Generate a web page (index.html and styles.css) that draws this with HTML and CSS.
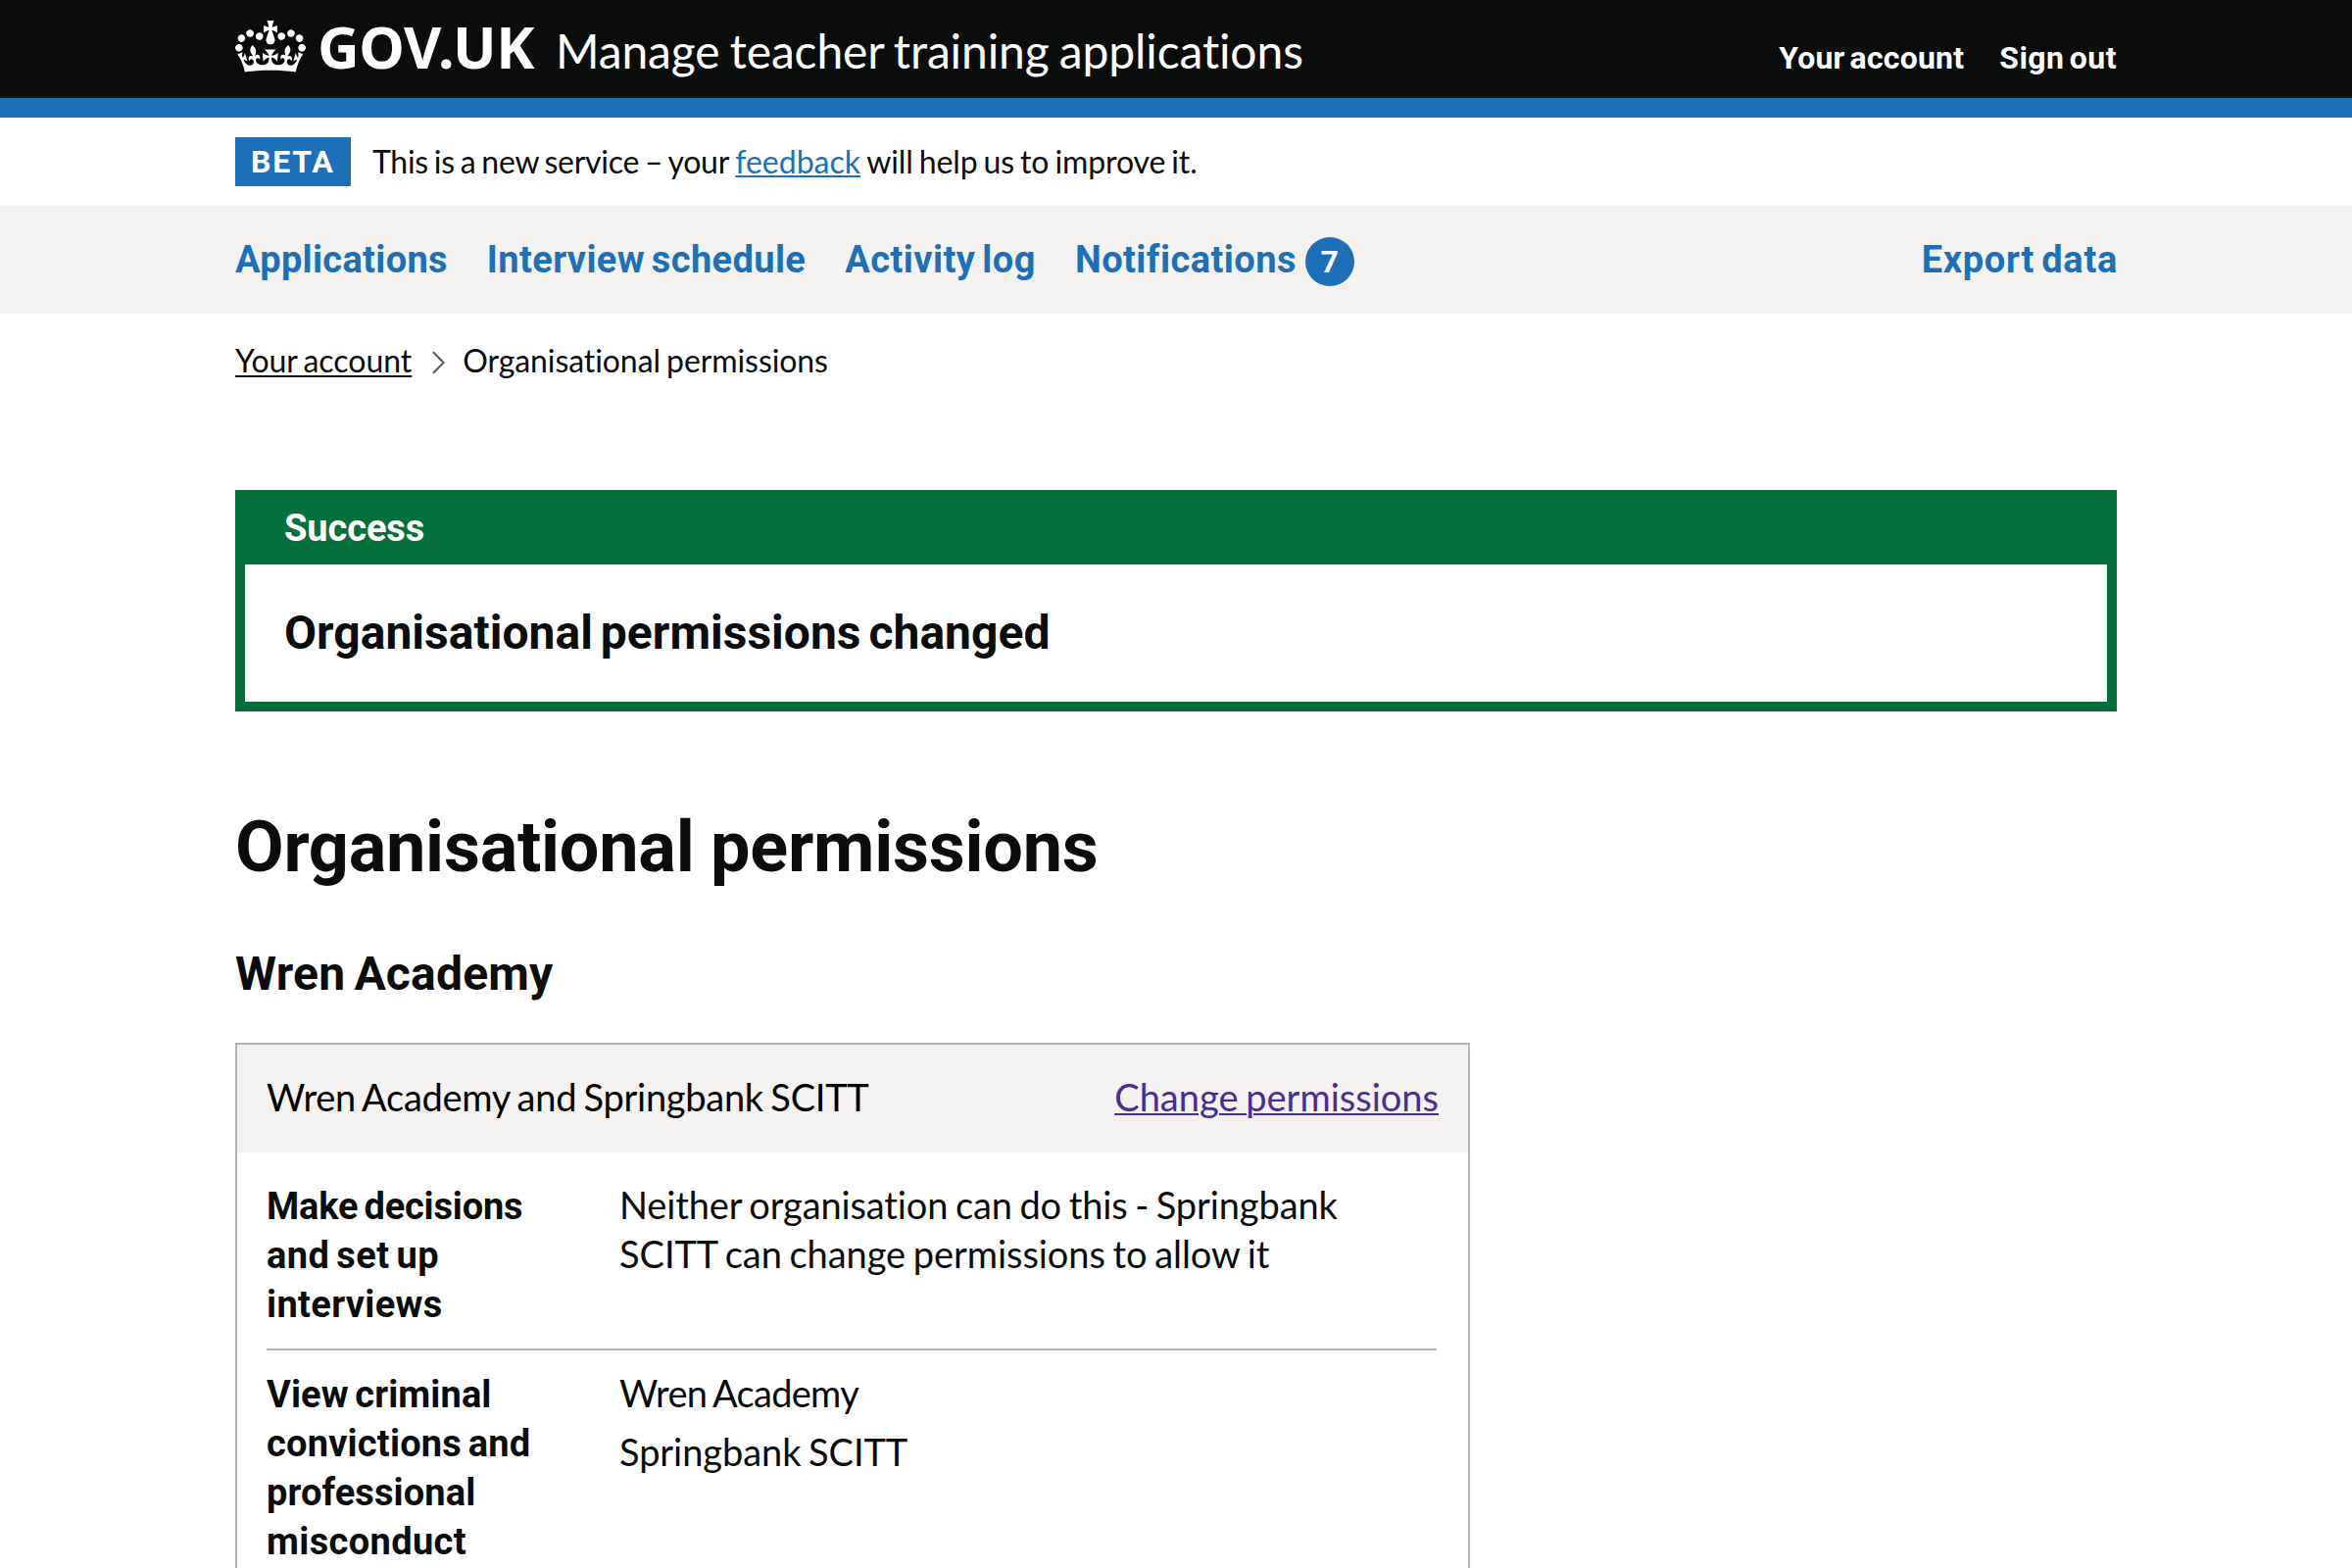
FILE: index.html
```
<!DOCTYPE html>
<html lang="en">
<head>
<meta charset="utf-8">
<title>Organisational permissions - Manage teacher training applications - GOV.UK</title>
<link rel="stylesheet" href="styles.css">
</head>
<body>
<header class="header">
  <div class="container header-inner">
    <svg class="crown" viewBox="0 0 132 97" width="72" height="53" aria-hidden="true"><path fill="#fff" fill-rule="evenodd" d="M25 30.2c3.5 1.5 7.7-.2 9.1-3.7 1.5-3.6-.2-7.8-3.9-9.2-3.6-1.4-7.6.3-9.1 3.9-1.4 3.5.3 7.5 3.9 9zM9 39.5c3.6 1.5 7.8-.2 9.2-3.7 1.5-3.6-.2-7.8-3.9-9.1-3.6-1.5-7.6.2-9.1 3.8-1.4 3.5.3 7.5 3.8 9zM4.4 57.2c3.5 1.5 7.7-.2 9.1-3.8 1.5-3.6-.2-7.7-3.9-9.1-3.5-1.5-7.6.3-9.1 3.8-1.4 3.5.3 7.6 3.9 9.1zm38.3-21.4c3.5 1.5 7.7-.2 9.1-3.8 1.5-3.6-.2-7.7-3.9-9.1-3.6-1.5-7.6.3-9.1 3.8-1.3 3.6.4 7.7 3.9 9.1zm64.4-5.6c-3.6 1.5-7.8-.2-9.1-3.7-1.5-3.6.2-7.8 3.8-9.2 3.6-1.4 7.7.3 9.2 3.9 1.3 3.5-.4 7.5-3.9 9zm15.9 9.3c-3.6 1.5-7.7-.2-9.1-3.7-1.5-3.6.2-7.8 3.7-9.1 3.6-1.5 7.7.2 9.2 3.8 1.5 3.5-.3 7.5-3.8 9zm4.7 17.7c-3.6 1.5-7.8-.2-9.2-3.8-1.5-3.6.2-7.7 3.9-9.1 3.6-1.5 7.7.3 9.2 3.8 1.3 3.5-.4 7.6-3.9 9.1zM89.3 35.8c-3.6 1.5-7.8-.2-9.2-3.8-1.4-3.6.2-7.7 3.9-9.1 3.6-1.5 7.7.3 9.2 3.8 1.4 3.6-.3 7.7-3.9 9.1zM69.7 17.7l8.9 4.7V9.3l-8.9 2.8c-.2-.3-.5-.6-.9-.9L72.4 0H59.6l3.5 11.2c-.3.3-.6.5-.9.9l-8.8-2.8v13.1l8.8-4.7c.3.3.6.7.9.9l-5 15.4v.1c-.2.8-.4 1.6-.4 2.4 0 4.1 3.1 7.5 7 8.1h.2c.3 0 .7.1 1 .1.4 0 .7 0 1-.1h.2c4-.6 7.1-4.1 7.1-8.1 0-.8-.1-1.7-.4-2.4V34l-5.1-15.4c.4-.2.7-.6 1-.9zM66 92.8c16.9 0 32.8 1.1 47.1 3.2 4-16.9 8.9-26.7 14-33.5l-9.6-3.4c1 4.9 1.1 7.2 0 10.2-1.5-1.4-3-4.3-4.2-8.7L108.6 76c2.8-2 5-3.2 7.5-3.3-4.4 9.4-10 11.9-13.6 11.2-4.3-.8-6.3-4.6-5.6-7.9 1-4.7 5.7-5.9 8-.5 4.3-8.7-3-11.4-7.6-8.8 7.1-7.2 7.9-13.5 2.1-21.1-8 6.1-8.1 12.3-4.5 20.8-4.7-5.4-12.1-2.5-9.5 6.2 3.4-5.2 7.9-2 7.2 3.1-.6 4.3-6.4 7.8-13.5 7.2-10.3-.9-10.9-8-11.2-13.8 2.5-.5 7.1 1.8 11 7.3L80.2 60c-4.1 4.4-8 5.3-12.3 5.4 1.4-4.4 8-11.6 8-11.6H55.5s6.4 7.2 7.9 11.6c-4.2-.1-8-1-12.3-5.4l1.4 16.4c3.9-5.5 8.5-7.7 10.9-7.3-.3 5.8-.9 12.8-11.1 13.8-7.2.6-12.9-2.9-13.5-7.2-.7-5 3.8-8.3 7.1-3.1 2.7-8.7-4.6-11.6-9.4-6.2 3.7-8.5 3.6-14.7-4.6-20.8-5.8 7.6-5 13.9 2.2 21.1-4.7-2.6-11.9.1-7.7 8.8 2.3-5.5 7.1-4.2 8.1.5.7 3.3-1.3 7.1-5.7 7.9-3.5.7-9-1.8-13.5-11.2 2.5.1 4.7 1.3 7.5 3.3l-4.7-15.4c-1.2 4.4-2.7 7.2-4.3 8.7-1.1-3-.9-5.3 0-10.2l-9.5 3.4c5 6.9 9.9 16.7 14 33.5 14.8-2.1 30.8-3.2 47.7-3.2z"/></svg>
    <span class="logotype">GOV.UK</span>
    <span class="service-name">Manage teacher training applications</span>
    <nav class="header-links">
      <a class="link-account" href="#">Your account</a>
      <a class="link-signout" href="#">Sign out</a>
    </nav>
  </div>
</header>

<div class="container phase-banner">
  <strong class="tag">BETA</strong>
  <span class="phase-text"><span class="phase-lead">This is a new service – your</span> <a class="link" href="#">feedback</a> <span class="phase-tail">will help us to improve it.</span></span>
</div>

<nav class="primary-nav">
  <div class="container primary-nav-inner">
    <a class="nav-applications" href="#">Applications</a>
    <a class="nav-interviews" href="#">Interview schedule</a>
    <a class="nav-activity" href="#">Activity log</a>
    <a class="nav-notifications" href="#">Notifications<span class="count">7</span></a>
    <a class="nav-export" href="#">Export data</a>
  </div>
</nav>

<div class="container breadcrumbs">
  <a class="crumb-link" href="#">Your account</a>
  <svg class="chevron" width="14" height="24" viewBox="0 0 14 24" aria-hidden="true"><path d="M1 1.2 11.6 12 1 22.8" fill="none" stroke="#505a5f" stroke-width="2"/></svg>
  <span class="crumb-current">Organisational permissions</span>
</div>

<main class="container">
  <section class="notification">
    <h2 class="notification-title">Success</h2>
    <div class="notification-content"><p class="notification-heading">Organisational permissions changed</p></div>
  </section>

  <h1 class="page-title">Organisational permissions</h1>
  <h2 class="section-title">Wren Academy</h2>

  <section class="card">
    <div class="card-header">
      <h3 class="card-title">Wren Academy and Springbank SCITT</h3>
      <a class="card-action" href="#">Change permissions</a>
    </div>
    <dl class="summary">
      <div class="row">
        <dt><span class="key-make">Make decisions</span> <span class="key-setup">and set up</span> <span class="key-word">interviews</span></dt>
        <dd><span class="value-neither">Neither organisation can do this - Springbank</span> <span class="value-can">SCITT can change permissions to allow it</span></dd>
      </div>
      <div class="row">
        <dt><span class="key-view">View criminal</span> <span class="key-convictions">convictions and</span> <span class="key-professional">professional</span> <span class="key-word">misconduct</span></dt>
        <dd>
          <ul>
            <li class="value-wren">Wren Academy</li>
            <li class="value-springbank">Springbank SCITT</li>
          </ul>
        </dd>
      </div>
    </dl>
  </section>
</main>
</body>
</html>
```
FILE: styles.css
```
* { box-sizing: border-box; }

body {
  margin: 0;
  height: 1600px;
  overflow: hidden;
  background: #fff;
  color: #0b0c0c;
  font: 400 38px/50px Lato, "Liberation Sans", sans-serif;
  word-spacing: -2px;
}

h1, h2, h3, p, dl, dt, dd, ul { margin: 0; padding: 0; }
ul { list-style: none; }

.container { width: 1920px; margin: 0 auto; }

.logotype, .header-links, .tag, .primary-nav, .notification,
.page-title, .section-title, dt {
  font-family: Roboto, "Liberation Sans", sans-serif;
  font-weight: 700;
  word-spacing: -3px;
}

/* Header */
.header {
  height: 120px;
  background: #0b0c0c;
  border-bottom: 20px solid #1d70b8;
  color: #fff;
}
.header-inner { display: flex; align-items: baseline; padding-top: 17px; }
.crown { align-self: flex-start; margin: 4px 12px 0 0; }
.logotype { font: 700 59px/60px "Noto Sans", sans-serif; letter-spacing: -.4px; }
.service-name { margin-left: 22px; font-size: 48px; line-height: 50px; letter-spacing: -.12px; white-space: nowrap; }
.header-links { display: flex; gap: 36px; margin-left: auto; font-size: 32px; line-height: 40px; }
.header-links a { color: #fff; text-decoration: none; }
.link-account { letter-spacing: .2px; }
.link-signout { letter-spacing: .45px; }

/* Phase banner */
.phase-banner { display: flex; height: 90px; padding-top: 20px; font-size: 32px; }
.tag { width: 118px; height: 50px; padding-left: 16px; background: #1d70b8; color: #fff; letter-spacing: 1.8px; }
.phase-text { margin-left: 22px; white-space: nowrap; }
.phase-lead { letter-spacing: -.27px; }
.phase-tail { letter-spacing: -.12px; }
.link { color: #1d70b8; text-decoration-thickness: 2px; text-underline-offset: 2px; }

/* Primary navigation */
.primary-nav { height: 110px; background: #f3f2f1; }
.primary-nav-inner { display: flex; gap: 40px; padding-top: 30px; }
.primary-nav a { color: #1d70b8; text-decoration: none; white-space: nowrap; }
.nav-applications { letter-spacing: .31px; }
.nav-interviews { letter-spacing: .38px; }
.nav-activity { letter-spacing: .45px; }
.nav-notifications { display: flex; letter-spacing: .45px; }
.nav-export { margin: 0 -1px 0 auto; letter-spacing: .7px; }
.count {
  width: 50px;
  height: 50px;
  margin: 2px 0 0 9px;
  border-radius: 50%;
  background: #1d70b8;
  color: #fff;
  font-size: 32px;
  text-align: center;
}

/* Breadcrumbs */
.breadcrumbs { display: flex; height: 180px; padding-top: 28px; font-size: 32px; line-height: 40px; }
.crumb-link { color: #0b0c0c; letter-spacing: -.03px; text-decoration-thickness: 2px; text-underline-offset: 3px; }
.chevron { margin: 10px 17px 0 21px; }
.crumb-current { letter-spacing: -.08px; }

/* Success banner */
.notification { height: 226px; border: 10px solid #05703b; background: #05703b; }
.notification-title { height: 66px; padding: 4px 0 0 40px; color: #fff; font-size: 38px; letter-spacing: -.1px; }
.notification-content { height: 140px; padding: 40px 40px 0; background: #fff; }
.notification-heading { font-size: 48px; line-height: 60px; letter-spacing: .02px; word-spacing: -4px; }

.page-title { margin-top: 99px; font-size: 72px; line-height: 80px; letter-spacing: -.25px; word-spacing: -1px; }
.section-title { margin-top: 59px; font-size: 48px; line-height: 60px; letter-spacing: .2px; word-spacing: -3px; }

/* Permissions card */
.card { width: 1260px; margin-top: 40px; border: 2px solid #b1b4b6; }
.card-header { display: flex; justify-content: space-between; height: 110px; padding: 28px 30px 0; background: #f3f2f1; }
.card-title { color: #000; font-size: 38px; font-weight: 400; letter-spacing: -.28px; }
.card-action { color: #4c2c92; text-decoration-thickness: 2px; text-underline-offset: 2px; }
.summary { margin: 0 32px 0 30px; padding-top: 10px; }
.row { display: grid; grid-template-columns: 360px 1fr; padding: 18px 0 20px; border-bottom: 2px solid #b1b4b6; }
dt { padding-top: 2px; }
dt span, dd span { display: block; white-space: nowrap; }
.key-make { letter-spacing: -.2px; }
.key-setup { letter-spacing: .45px; }
.key-word { letter-spacing: .35px; }
.key-professional { letter-spacing: .1px; }
.key-view { letter-spacing: .1px; }
.key-convictions { letter-spacing: .2px; }
.value-neither { letter-spacing: -.12px; }
.value-can { letter-spacing: -.06px; }
.value-wren { margin-bottom: 10px; letter-spacing: -.7px; }
.value-springbank { letter-spacing: -.07px; }
```
